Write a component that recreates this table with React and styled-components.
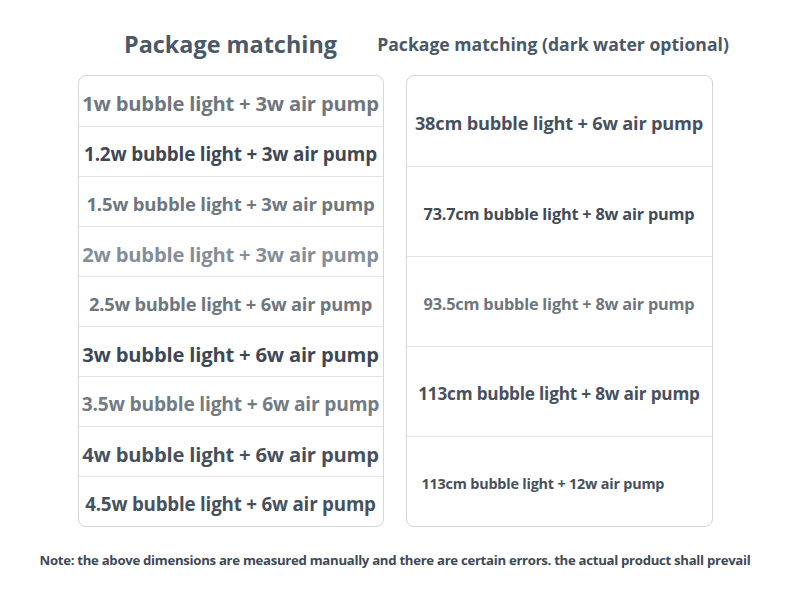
import React from 'react'
import styled, {createGlobalStyle} from 'styled-components'

const Global = createGlobalStyle`
  body {
    margin: 0;
    background: #ffffff;
    font-family: "Open Sans", "Noto Sans", sans-serif;
  }
`

const Page = styled.div`
  width: 790px;
  height: 614px;
  padding-top: 26px;
  box-sizing: border-box;
  display: flex;
  flex-direction: column;
  align-items: center;
`

const Columns = styled.div`
  display: grid;
  grid-template-columns: 306px 307px;
  column-gap: 22px;
`

const Column = styled.div`
  display: flex;
  flex-direction: column;
  align-items: center;
`

const Title = styled.h2`
  margin: 0;
  height: 36px;
  display: flex;
  align-items: center;
  font-weight: 700;
  font-size: ${({small}) => (small ? '17.6px' : '23.4px')};
  color: #4a5868;
  white-space: nowrap;
  margin-left: ${({shift}) => shift || 0}px;
`

const Card = styled.div`
  margin-top: 13px;
  width: 100%;
  height: 452px;
  box-sizing: border-box;
  border: 1px solid #d6d6d6;
  border-radius: 8px;
  display: grid;
  grid-template-rows: repeat(${({rows}) => rows}, 1fr);
  overflow: hidden;
`

const Row = styled.div`
  display: flex;
  align-items: center;
  justify-content: ${({left}) => (left ? 'flex-start' : 'center')};
  padding-left: ${({left}) => (left ? '15px' : '0')};
  padding-top: 4px;
  border-top: 1px solid #e4e4e4;
  &:first-child {
    border-top: none;
  }
  font-weight: 700;
  font-size: ${({size}) => size}px;
  color: ${({tone}) => tone};
  white-space: nowrap;
  letter-spacing: -0.2px;
`

const Note = styled.p`
  margin: 24px 0 0;
  font-size: 13.2px;
  font-weight: 700;
  color: #3e4956;
  letter-spacing: -0.3px;
  white-space: nowrap;
`

const DARK = '#3e4855'
const MID = '#6e767e'
const LIGHT = '#858e98'

const leftRows = [
  ['1w bubble light + 3w air pump', 20.2, MID],
  ['1.2w bubble light + 3w air pump', 18.9, DARK],
  ['1.5w bubble light + 3w air pump', 18.6, MID],
  ['2w bubble light + 3w air pump', 20.2, LIGHT],
  ['2.5w bubble light + 6w air pump', 18.3, MID],
  ['3w bubble light + 6w air pump', 20.2, DARK],
  ['3.5w bubble light + 6w air pump', 19.2, '#737b83'],
  ['4w bubble light + 6w air pump', 20.2, '#47515e'],
  ['4.5w bubble light + 6w air pump', 18.75, '#47515e'],
]

const rightRows = [
  ['38cm bubble light + 6w air pump', 18.2, '#47515e'],
  ['73.7cm bubble light + 8w air pump', 16.3, '#424b56'],
  ['93.5cm bubble light + 8w air pump', 16.3, MID],
  ['113cm bubble light + 8w air pump', 17.2, '#47515e'],
  ['113cm bubble light + 12w air pump', 14.4, '#47515e', true],
]

export default function App() {
  return (
    <Page>
      <Global />
      <Columns>
        <Column>
          <Title>Package matching</Title>
          <Card rows={leftRows.length}>
            {leftRows.map(([text, size, tone]) => (
              <Row key={text} size={size} tone={tone}>
                {text}
              </Row>
            ))}
          </Card>
        </Column>
        <Column>
          <Title small shift={-12}>
            Package matching (dark water optional)
          </Title>
          <Card rows={rightRows.length}>
            {rightRows.map(([text, size, tone, left]) => (
              <Row key={text} size={size} tone={tone} left={left}>
                {text}
              </Row>
            ))}
          </Card>
        </Column>
      </Columns>
      <Note>
        Note: the above dimensions are measured manually and there are certain
        errors. the actual product shall prevail
      </Note>
    </Page>
  )
}
